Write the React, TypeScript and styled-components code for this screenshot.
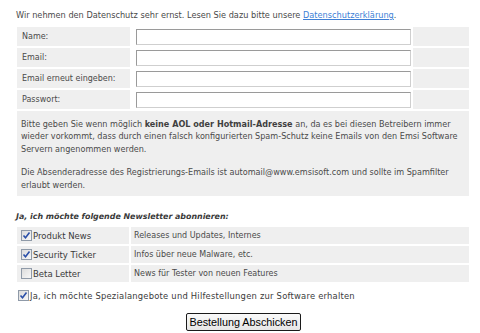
import React from "react";
import styled, { createGlobalStyle } from "styled-components";

const GlobalStyle = createGlobalStyle`
  html, body {
    margin: 0;
    padding: 0;
    background: #ffffff;
  }
  body {
    font-family: "DejaVu Sans", Verdana, sans-serif;
    font-size: 8px;
    color: #4a4a4a;
  }
`;

const Page = styled.div`
  width: 480px;
  height: 333px;
  padding: 10px 11px 0 16px;
  box-sizing: border-box;
  overflow: hidden;
`;

const Intro = styled.p`
  margin: 0 0 6px 0;
  line-height: 11px;
  font-size: 8.2px;
  white-space: nowrap;
`;

const Link = styled.a`
  color: #3d7fd6;
  text-decoration: underline;
`;

const FormGrid = styled.div`
  display: grid;
  grid-template-columns: 113px 279px 56px;
  gap: 2px;
  margin-left: 1px;
`;

const Cell = styled.div<{ $shade?: boolean }>`
  background: ${(p) => (p.$shade ? "#efefef" : "#ffffff")};
  height: 19px;
  display: flex;
  align-items: center;
  padding-left: 5px;
  box-sizing: border-box;
  font-size: 8px;
  white-space: nowrap;
`;

const InputCell = styled(Cell)`
  padding-left: 4px;
`;

const TextInput = styled.input`
  width: 275px;
  height: 16px;
  box-sizing: border-box;
  border: 1px solid #9a9a9a;
  border-right-color: #cfcfcf;
  border-bottom-color: #cfcfcf;
  padding: 0 3px;
  background: #ffffff;
  font: inherit;
  outline: none;
`;

const Notice = styled.div`
  grid-column: 1 / -1;
  background: #efefef;
  padding: 7px 8px 0 4px;
  font-size: 8.1px;
  line-height: 12.4px;
  height: 85px;
  box-sizing: border-box;
`;

const NoticePara = styled.p`
  margin: 0 0 11px 0;
  &:last-child {
    margin-bottom: 0;
  }
`;

const Strong = styled.b`
  font-weight: bold;
  color: #3f3f3f;
`;

const NewsHeading = styled.div`
  margin: 16px 0 5px 0;
  font-weight: bold;
  font-style: italic;
  font-size: 7.9px;
  color: #3a3a3a;
  line-height: 10px;
  white-space: nowrap;
`;

const NewsGrid = styled.div`
  display: grid;
  grid-template-columns: 112px 338px;
  gap: 2px;
  margin-left: 1px;
`;

const NewsLabel = styled.label`
  background: #efefef;
  height: 17px;
  display: flex;
  align-items: center;
  padding-left: 4px;
  gap: 1px;
  font-size: 8.5px;
  color: #3a3a3a;
  white-space: nowrap;
`;

const NewsDesc = styled.div`
  background: #efefef;
  height: 17px;
  display: flex;
  align-items: center;
  padding-left: 3px;
  font-size: 8px;
  white-space: nowrap;
`;

const Box = styled.span`
  display: inline-flex;
  align-items: center;
  justify-content: center;
  width: 11px;
  height: 11px;
  box-sizing: border-box;
  border: 1px solid #8f9aa8;
  background: linear-gradient(135deg, #dcdcdc 0%, #f7f7f7 100%);
  flex-shrink: 0;
`;

const SpecialRow = styled.label`
  display: flex;
  align-items: center;
  gap: 1px;
  height: 11px;
  margin: 8px 0 0 2px;
  font-size: 8.4px;
  letter-spacing: 0.22px;
  color: #3a3a3a;
  white-space: nowrap;
`;

const ButtonRow = styled.div`
  display: flex;
  justify-content: center;
  margin-top: 12px;
`;

const Submit = styled.button`
  font-family: "Liberation Sans", Arial, sans-serif;
  font-size: 10.8px;
  color: #000000;
  height: 18px;
  padding: 0 2px;
  border: 1px solid #1a1a1a;
  border-radius: 2px;
  background: linear-gradient(#fafafa, #e6e6e6);
  margin-left: 2px;
`;

const Check: React.FC<{ checked?: boolean }> = ({ checked }) => (
  <Box>
    {checked && (
      <svg width="9" height="9" viewBox="0 0 9 9">
        <path d="M1.5 4.5 L3.5 6.8 L7.5 1.5" fill="none" stroke="#2a4fa8" strokeWidth="1.6" />
      </svg>
    )}
  </Box>
);

const fields = ["Name:", "Email:", "Email erneut eingeben:", "Passwort:"];

const newsletters = [
  { name: "Produkt News", desc: "Releases und Updates, Internes", checked: true },
  { name: "Security Ticker", desc: "Infos über neue Malware, etc.", checked: true },
  { name: "Beta Letter", desc: "News für Tester von neuen Features", checked: false },
];

const App: React.FC = () => {
  return (
    <Page>
      <GlobalStyle />
      <Intro>
        Wir nehmen den Datenschutz sehr ernst. Lesen Sie dazu bitte unsere{" "}
        <Link href="#">Datenschutzerklärung</Link>.
      </Intro>

      <FormGrid>
        {fields.map((f) => (
          <React.Fragment key={f}>
            <Cell $shade>{f}</Cell>
            <InputCell>
              <TextInput type={f === "Passwort:" ? "password" : "text"} />
            </InputCell>
            <Cell $shade />
          </React.Fragment>
        ))}
        <Notice>
          <NoticePara>
            Bitte geben Sie wenn möglich <Strong>keine AOL oder Hotmail-Adresse</Strong> an, da es bei diesen
            Betreibern immer wieder vorkommt, dass durch einen falsch konfigurierten Spam-Schutz keine Emails von
            den Emsi Software Servern angenommen werden.
          </NoticePara>
          <NoticePara>
            Die Absenderadresse des Registrierungs-Emails ist automail@www.emsisoft.com und sollte im Spamfilter
            erlaubt werden.
          </NoticePara>
        </Notice>
      </FormGrid>

      <NewsHeading>Ja, ich möchte folgende Newsletter abonnieren:</NewsHeading>
      <NewsGrid>
        {newsletters.map((n) => (
          <React.Fragment key={n.name}>
            <NewsLabel>
              <Check checked={n.checked} />
              {n.name}
            </NewsLabel>
            <NewsDesc>{n.desc}</NewsDesc>
          </React.Fragment>
        ))}
      </NewsGrid>

      <SpecialRow>
        <Check checked />
        Ja, ich möchte Spezialangebote und Hilfestellungen zur Software erhalten
      </SpecialRow>

      <ButtonRow>
        <Submit type="button">Bestellung Abschicken</Submit>
      </ButtonRow>
    </Page>
  );
};

export default App;
